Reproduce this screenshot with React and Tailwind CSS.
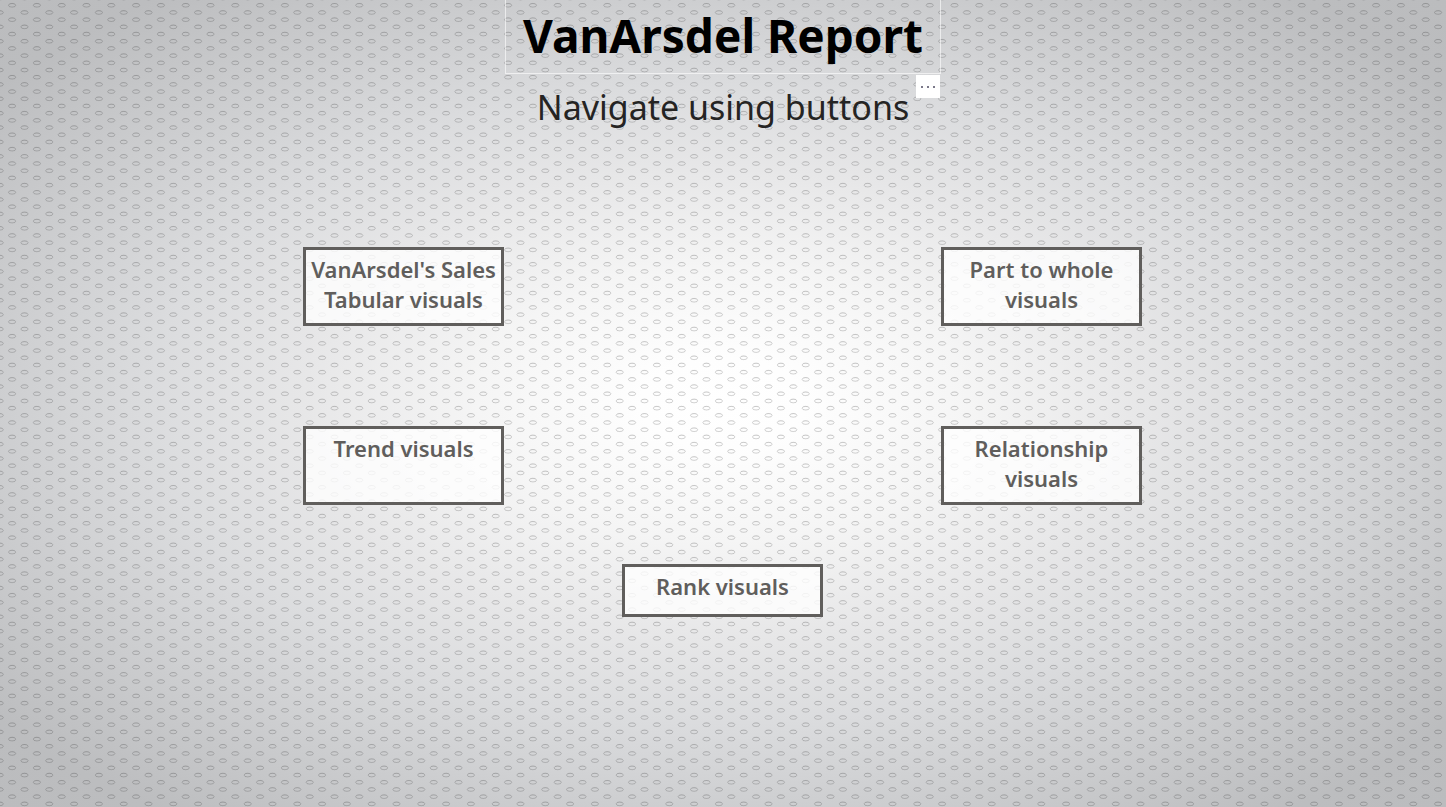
import React from "react";

const navButtons = [
  { id: "tabular", lines: ["VanArsdel's Sales", "Tabular visuals"] },
  { id: "part", lines: ["Part to whole", "visuals"] },
  { id: "trend", lines: ["Trend visuals"] },
  { id: "relationship", lines: ["Relationship", "visuals"] },
];

// Staggered dimple centres for one 124 x 259 tile of the metal texture.
const dimples = [];
for (let row = 0; row < 36; row++) {
  for (let col = 0; col < 5; col++) {
    dimples.push({
      x: 6.1 + col * 24.8 + (row % 2) * 12.4,
      y: 4.3 + row * 7.194,
    });
  }
}

function Backdrop() {
  return (
    <svg className="absolute inset-0 h-full w-full" aria-hidden="true">
      <defs>
        <radialGradient id="glow" cx="50%" cy="50%" r="70.7%">
          <stop offset="0" stopColor="#ffffff" />
          <stop offset="0.08" stopColor="#fefefe" />
          <stop offset="0.24" stopColor="#f5f5f5" />
          <stop offset="0.41" stopColor="#e7e7e8" />
          <stop offset="0.56" stopColor="#dbdcde" />
          <stop offset="0.71" stopColor="#cdced0" />
          <stop offset="0.9" stopColor="#bcbdbf" />
          <stop offset="1" stopColor="#bbbcbe" />
        </radialGradient>
        <pattern id="dimples" x="6" y="1" width="124" height="259" patternUnits="userSpaceOnUse">
          <g fill="none" stroke="#000">
            {dimples.map(({ x, y }) => (
              <g key={`${x}-${y}`}>
                <ellipse cx={x} cy={y} rx="3.6" ry="1.8" strokeOpacity="0.17" />
                <path d={`M${x - 2} ${y - 1.8}h4`} strokeOpacity="0.05" />
              </g>
            ))}
          </g>
        </pattern>
      </defs>
      <rect width="100%" height="100%" fill="url(#glow)" />
      <rect width="100%" height="100%" fill="url(#dimples)" />
    </svg>
  );
}

function NavButton({ lines, short }) {
  return (
    <button
      type="button"
      className={`w-[201px] border-3 border-[#605e5c] bg-white/80 pt-1 text-center text-[22px] leading-[30px] font-[650] text-[#605e5c] flex flex-col items-center justify-start whitespace-nowrap ${short ? "h-[53px]" : "h-[79px]"}`}
    >
      {lines.map((line) => (
        <span key={line}>{line}</span>
      ))}
    </button>
  );
}

export default function App() {
  return (
    <div className="relative min-h-screen overflow-hidden font-['Noto_Sans','Open_Sans',sans-serif]">
      <Backdrop />
      <main className="relative flex flex-col items-center">
        <header className="relative w-[436px] text-center whitespace-nowrap">
          <h1 className="h-[74px] border border-t-0 border-white/60 text-[46px] leading-[70px] font-bold text-black">
            VanArsdel Report
          </h1>
          <p className="mt-1 text-[34px] leading-[58px] font-normal text-[#252423]">
            Navigate using buttons
          </p>
          <button
            type="button"
            aria-label="More options"
            className="absolute right-px top-[75px] flex h-[23px] w-6 items-center justify-center bg-white"
          >
            <svg width="16" height="4" viewBox="0 0 16 4" fill="#7a7889" aria-hidden="true">
              <rect x="1" y="1" width="2" height="2" />
              <rect x="7" y="1" width="2" height="2" />
              <rect x="13" y="1" width="2" height="2" />
            </svg>
          </button>
        </header>
        <nav aria-label="Report pages" className="mt-[111px] flex w-full max-w-[840px] flex-col items-center pr-px">
          <div className="grid w-full grid-cols-[auto_auto] justify-between gap-y-[100px]">
            {navButtons.map((b) => (
              <NavButton key={b.id} lines={b.lines} />
            ))}
          </div>
          <div className="mt-[59px]">
            <NavButton lines={["Rank visuals"]} short />
          </div>
        </nav>
      </main>
    </div>
  );
}
